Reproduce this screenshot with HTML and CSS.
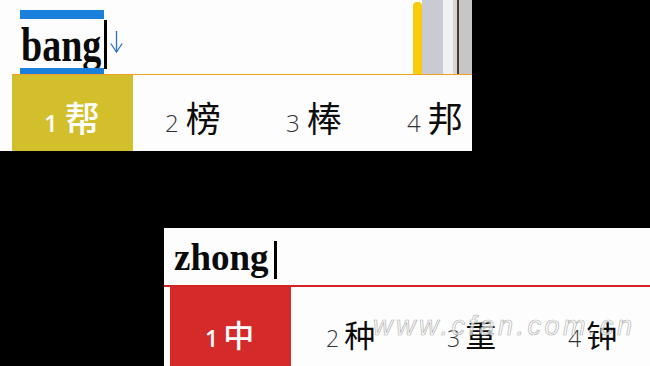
FILE: index.html
```html
<!DOCTYPE html>
<html lang="zh-CN">
<head>
<meta charset="utf-8">
<title>IME</title>
<link rel="stylesheet" href="styles.css">
</head>
<body>
<div class="screen">
  <section class="ime ime-top">
    <div class="input-row">
      <div class="comp">
        <div class="bar bar-top"></div>
        <div class="comp-text"><span class="comp-glyphs">bang</span></div>
        <div class="bar bar-bottom"></div>
      </div>
      <div class="caret caret-top"></div>
      <svg class="arrow" viewBox="0 0 13 23" width="13" height="23">
        <line x1="6.5" y1="1" x2="6.5" y2="22" />
        <polyline points="0.8,13.5 6.5,22 12.2,13.5" />
      </svg>
      <div class="strip">
        <div class="strip-yellow"></div>
        <div class="strip-blue"></div>
        <div class="strip-white"></div>
        <div class="strip-light"></div>
        <div class="strip-dark"></div>
        <div class="strip-gray"></div>
      </div>
    </div>
    <div class="rule rule-orange"></div>
    <div class="cands cands-top">
      <div class="cand cand-active cand-gold"><span class="num">1</span><span class="ch">帮</span></div>
      <div class="cand"><span class="num">2</span><span class="ch">榜</span></div>
      <div class="cand"><span class="num">3</span><span class="ch">棒</span></div>
      <div class="cand"><span class="num">4</span><span class="ch">邦</span></div>
    </div>
  </section>

  <section class="ime ime-bottom">
    <div class="input-row2">
      <span class="zh-text">zhong</span>
      <div class="caret caret-bottom"></div>
    </div>
    <div class="rule rule-red"></div>
    <div class="cands cands-bottom">
      <div class="cand cand-active cand-red"><span class="num">1</span><span class="ch">中</span></div>
      <div class="cand"><span class="num">2</span><span class="ch">种</span></div>
      <div class="cand"><span class="num">3</span><span class="ch">重</span></div>
      <div class="cand"><span class="num">4</span><span class="ch">钟</span></div>
      <div class="watermark">www.cfan.com.cn</div>
    </div>
  </section>
</div>
</body>
</html>
```

FILE: styles.css
```css
html, body {
  margin: 0;
  padding: 0;
  background: #000;
}
body {
  width: 650px;
  height: 366px;
  overflow: hidden;
}
.screen {
  display: flex;
  flex-direction: column;
  align-items: flex-start;
}
.ime {
  background: #fdfdfd;
  box-sizing: border-box;
  overflow: hidden;
}
.ime-top {
  width: 472px;
  height: 151px;
}
.ime-bottom {
  width: 486px;
  height: 138px;
  margin: 77px 0 0 164px;
}

/* ---------- top composition row ---------- */
.input-row {
  display: flex;
  align-items: flex-start;
  height: 74px;
  padding-left: 20px;
  box-sizing: border-box;
}
.comp {
  width: 84px;
  margin-top: 10px;
  display: flex;
  flex-direction: column;
}
.bar {
  background: #1a80dc;
}
.bar-top {
  height: 9px;
}
.bar-bottom {
  height: 6px;
}
.comp-text {
  height: 49px;
  overflow: hidden;
}
.comp-glyphs {
  display: block;
  padding-left: 1px;
  font-family: "Liberation Serif", "Times New Roman", serif;
  font-weight: bold;
  font-size: 38px;
  line-height: 49px;
  color: #0a0a0a;
  transform-origin: 0 37.3px;
  transform: translateY(5px) scaleY(1.3);
}
.caret {
  background: #000;
  width: 3px;
  flex-shrink: 0;
}
.caret-top {
  margin-top: 20px;
  height: 49px;
}
.arrow {
  margin: 30px 0 0 3px;
  fill: none;
  stroke: #2f70c0;
  stroke-width: 1.3;
}
.strip {
  margin-left: auto;
  width: 59px;
  height: 74px;
  display: flex;
}
.strip-yellow {
  width: 9px;
  margin-top: 2px;
  border-radius: 4px 4px 0 0;
  background: #f8cb0c;
}
.strip-blue {
  width: 21px;
  background: #c8cbd3;
}
.strip-white {
  width: 10px;
  background: #f0f1f3;
}
.strip-light {
  width: 4px;
  background: #d6d6d6;
}
.strip-dark {
  width: 2px;
  background: #4a3b30;
}
.strip-gray {
  width: 13px;
  background: #c6c6c6;
}
.rule-orange {
  height: 1px;
  margin-left: 12px;
  background: #f0a024;
}

/* ---------- candidates ---------- */
.cands {
  display: flex;
  box-sizing: border-box;
}
.cand {
  flex: 0 0 121px;
  width: 121px;
  display: flex;
  align-items: baseline;
  box-sizing: border-box;
}
.num {
  font-family: "Open Sans", "Noto Sans", sans-serif;
  font-weight: 300;
  color: #333;
}
.ch {
  font-family: "Noto Sans CJK SC", "Noto Sans", sans-serif;
  color: #0c0c0c;
}
.cand-active .num {
  color: #fff;
  font-weight: 600;
}
.cand-active .ch {
  color: #fff;
  font-weight: 500;
}
.cands-top {
  height: 76px;
  padding-left: 12px;
}
.cands-top .cand {
  padding: 25px 0 0 32px;
}
.cands-top .num {
  font-size: 24px;
  line-height: 34px;
  margin-right: 7px;
}
.cands-top .ch {
  font-size: 35px;
  line-height: 34px;
}
.cand-gold {
  background: #d3be2c;
}

/* ---------- bottom composition row ---------- */
.input-row2 {
  display: flex;
  align-items: flex-start;
  height: 57px;
  padding-left: 10px;
  box-sizing: border-box;
}
.zh-text {
  margin-top: 11px;
  font-family: "Liberation Serif", "Times New Roman", serif;
  font-weight: bold;
  font-size: 37px;
  line-height: 37px;
  color: #0a0a0a;
}
.caret-bottom {
  margin: 13px 0 0 5px;
  height: 38px;
}
.rule-red {
  height: 2px;
  background: #d42222;
}
.cands-bottom {
  position: relative;
  height: 79px;
  padding-left: 6px;
}
.cands-bottom .cand {
  padding: 31px 0 0 35px;
}
.cands-bottom .num {
  font-size: 23px;
  line-height: 31px;
  margin-right: 5px;
}
.cands-bottom .ch {
  font-size: 31px;
  line-height: 31px;
}
.cand-red {
  background: #d42a2a;
}
.watermark {
  position: absolute;
  left: 209px;
  top: 26px;
  font-family: "Liberation Sans", Arial, sans-serif;
  font-style: italic;
  font-size: 27px;
  line-height: 27px;
  letter-spacing: 3.5px;
  color: rgba(255, 255, 255, 0.7);
  -webkit-text-stroke: 0.7px #b4b4b4;
  pointer-events: none;
  white-space: nowrap;
}
```
